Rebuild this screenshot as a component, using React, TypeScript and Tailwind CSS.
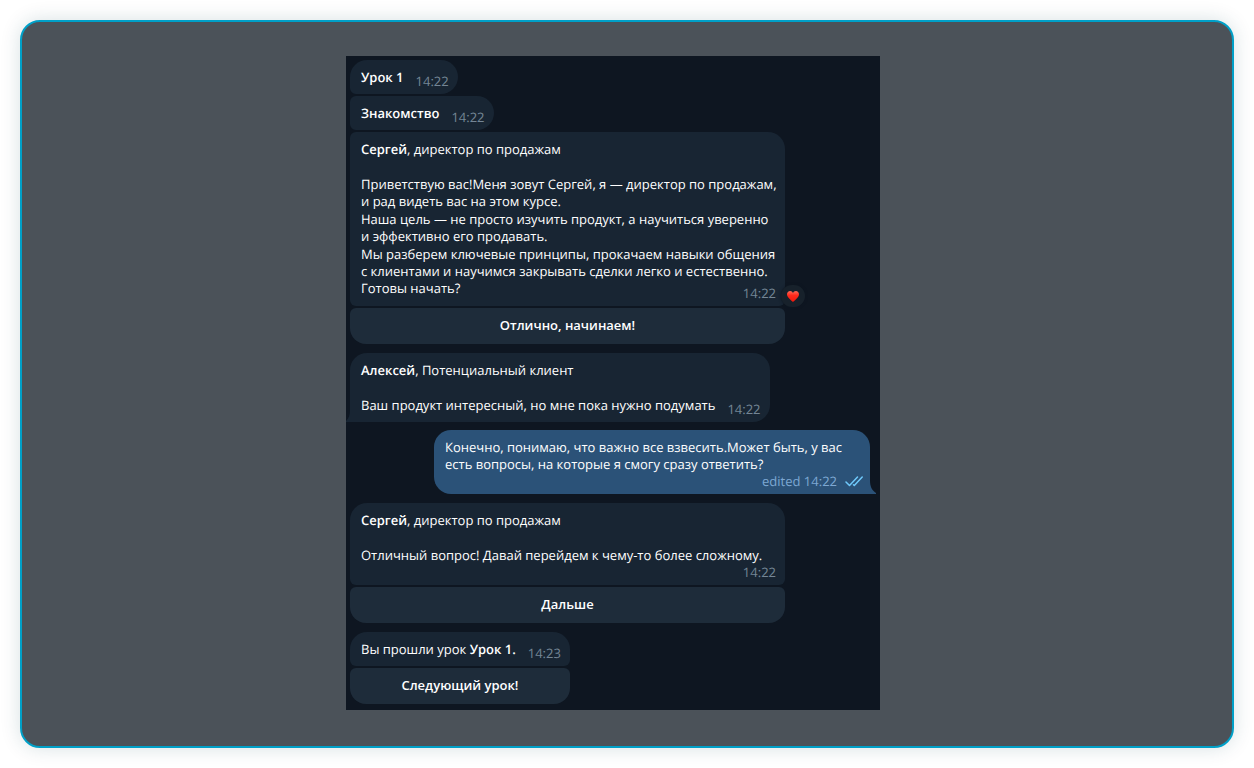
import React from 'react';
import clsx from 'clsx';

interface BubbleProps {
  children: React.ReactNode;
  className?: string;
  outgoing?: boolean;
}

const Bubble: React.FC<BubbleProps> = ({ children, className, outgoing = false }) => (
  <div
    className={clsx(
      'relative flex max-w-full flex-col pt-[9px] pr-[9px] pb-1 pl-[11px]',
      outgoing ? 'bg-[#2b5278]' : 'bg-[#182533]',
      className
    )}
  >
    {children}
  </div>
);

const Time: React.FC<{ value: string; className?: string }> = ({ value, className }) => (
  <time className={clsx('shrink-0 text-[#748595]', className)}>{value}</time>
);

// Text with the time hanging slightly below its baseline
const InlineRow: React.FC<{ children: React.ReactNode; time: string }> = ({ children, time }) => (
  <div className="flex items-end gap-3">
    <p className="pb-1">{children}</p>
    <Time value={time} />
  </div>
);

const Author: React.FC<{ name: string; role: string }> = ({ name, role }) => (
  <p className="mb-[18px]">
    <b className="font-semibold">{name}</b>, {role}
  </p>
);

const ReplyButton: React.FC<{ label: string }> = ({ label }) => (
  <button
    type="button"
    className="h-9 w-full rounded-t-[6px] rounded-b-2xl bg-[#1e2c3a] pb-[2px] text-center font-semibold text-white"
  >
    {label}
  </button>
);

const Heart = () => (
  <svg viewBox="0 0 24 22" className="h-[11px] w-3" aria-hidden="true">
    <defs>
      <linearGradient id="heart" x1="0" y1="0" x2="0" y2="1">
        <stop offset="0" stopColor="#ff6a58" />
        <stop offset="0.4" stopColor="#ff2a1c" />
        <stop offset="1" stopColor="#f0180c" />
      </linearGradient>
    </defs>
    <path
      d="M12 22C8 18 0 13 0 6.500C0 2.500 3 0 6.200 0C9 0 11 1.500 12 4C13 1.500 15 0 17.800 0C21 0 24 2.500 24 6.500C24 13 16 18 12 22Z"
      fill="url(#heart)"
    />
  </svg>
);

const DoubleCheck = () => (
  <svg
    viewBox="0 0 18 12"
    className="h-3 w-[18px]"
    fill="none"
    stroke="#6fc9fb"
    strokeWidth="1.5"
    strokeLinecap="round"
    strokeLinejoin="round"
    aria-hidden="true"
  >
    <path d="M1 6L4.500 9.500L12.500 1" />
    <path d="M8.500 8.700L9.300 9.500L17.200 1" />
  </svg>
);

export default function App() {
  return (
    <div className="min-h-screen bg-white p-5 font-['Open_Sans','Noto_Sans',sans-serif] text-[13px] leading-[17px] text-white [text-rendering:geometricPrecision]">
      <main className="flex justify-center rounded-[20px] border-2 border-[#00a0c8] bg-[#4b5259] pt-[34px] pr-7 pb-9 shadow-[0_0_20px_rgba(0,70,80,0.16)]">
        <section className="flex w-full max-w-[534px] flex-col items-start gap-2 bg-[#0e1621] px-1 pt-1 pb-[5px]">
          <div className="flex max-w-full flex-col items-start gap-[2px] pb-px">
            <Bubble className="rounded-[17px] rounded-bl-[6px]">
              <InlineRow time="14:22">
                <b className="font-semibold">Урок 1</b>
              </InlineRow>
            </Bubble>
            <Bubble className="rounded-l-[6px] rounded-r-[17px]">
              <InlineRow time="14:22">
                <b className="font-semibold">Знакомство</b>
              </InlineRow>
            </Bubble>
            <Bubble className="w-[435px] rounded-[6px] rounded-tr-[17px]">
              <Author name="Сергей" role="директор по продажам" />
              <div className="-mr-2 flex flex-col gap-px">
                <p>
                  Приветствую вас!Меня зовут Сергей, я — директор по продажам,
                  <br />и рад видеть вас на этом курсе.
                </p>
                <p>
                  Наша цель — не просто изучить продукт, а научиться уверенно
                  <br />и эффективно его продавать.
                </p>
                <p>
                  Мы разберем ключевые принципы, прокачаем навыки общения
                  <br />с клиентами и научимся закрывать сделки легко и естественно.
                  <br />
                  Готовы начать?
                </p>
              </div>
              <Time value="14:22" className="-mt-3 self-end" />
              <span className="absolute -right-5 -bottom-px flex h-[22px] w-6 items-center justify-center rounded-full bg-[#17212b] shadow-[0_0_3px_#0e1621]">
                <Heart />
              </span>
            </Bubble>
            <ReplyButton label="Отлично, начинаем!" />
          </div>

          <Bubble className="rounded-[17px] rounded-bl-none">
            <Author name="Алексей" role="Потенциальный клиент" />
            <InlineRow time="14:22">Ваш продукт интересный, но мне пока нужно подумать</InlineRow>
            <svg viewBox="0 0 4 12" className="absolute bottom-0 -left-1 h-3 w-1" fill="#182533" aria-hidden="true">
              <path d="M4 0C4 5 3 8 0 11V12H4Z" />
            </svg>
          </Bubble>

          <Bubble outgoing className="mr-[6px] mb-px w-[436px] self-end rounded-[17px] rounded-br-none">
            <p>
              Конечно, понимаю, что важно все взвесить.Может быть, у вас
              <br />
              есть вопросы, на которые я смогу сразу ответить?
            </p>
            <div className="-mr-[2px] flex items-center gap-2 self-end text-[#7da8d3]">
              <span>
                edited <time>14:22</time>
              </span>
              <DoubleCheck />
            </div>
            <svg viewBox="0 0 6 14" className="absolute -right-[6px] bottom-0 h-[14px] w-[6px]" fill="#2b5278" aria-hidden="true">
              <path d="M0 0C0 6 1.500 10 6 13V14H0Z" />
            </svg>
          </Bubble>

          <div className="flex max-w-full flex-col items-start gap-[2px] pb-px">
            <Bubble className="w-[435px] rounded-t-[17px] rounded-b-[6px]">
              <Author name="Сергей" role="директор по продажам" />
              <p>Отличный вопрос! Давай перейдем к чему-то более сложному.</p>
              <Time value="14:22" className="self-end" />
            </Bubble>
            <ReplyButton label="Дальше" />
          </div>

          <div className="flex max-w-full flex-col items-start gap-[2px] pb-px">
            <Bubble className="rounded-t-[17px] rounded-b-[6px]">
              <InlineRow time="14:23">
                Вы прошли урок <b className="font-semibold">Урок 1.</b>
              </InlineRow>
            </Bubble>
            <ReplyButton label="Следующий урок!" />
          </div>
        </section>
      </main>
    </div>
  );
}
